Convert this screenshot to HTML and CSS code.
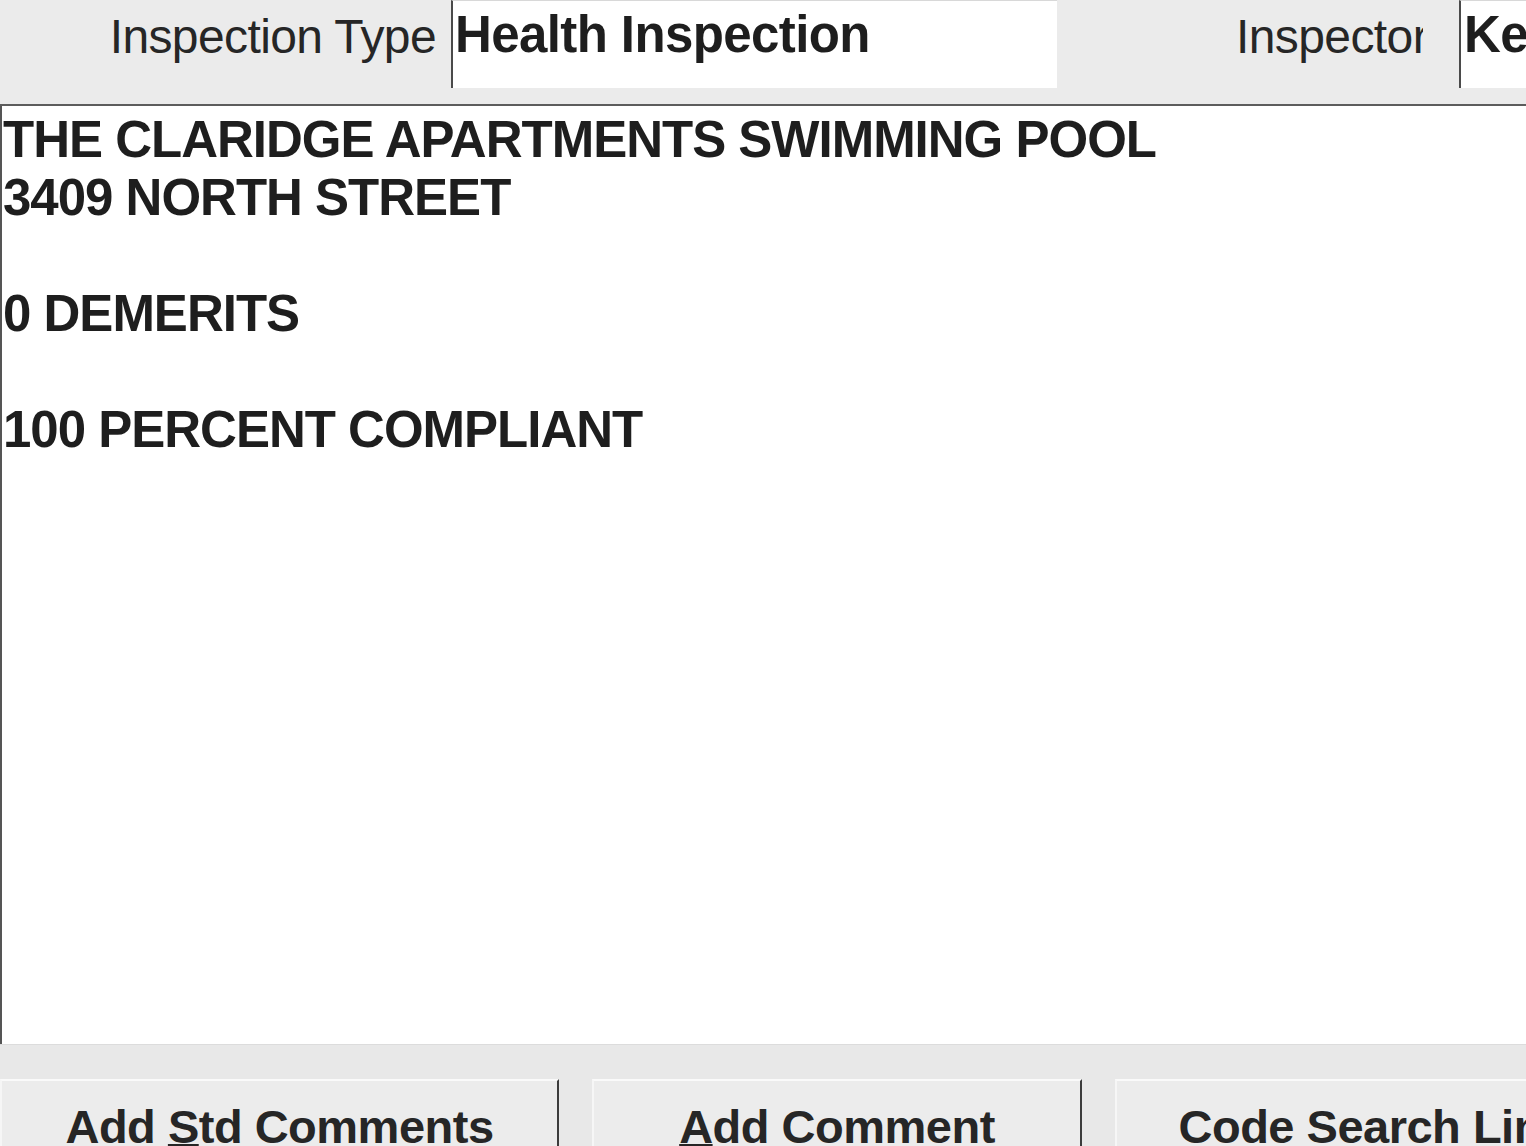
FILE: index.html
```html
<!DOCTYPE html>
<html lang="en">
<head>
<meta charset="utf-8">
<title>Inspection Comments</title>
<link rel="stylesheet" href="styles.css">
</head>
<body>
<div class="screen">
  <div class="topbar">
    <div class="label label-type">Inspection Type</div>
    <div class="field field-type">Health Inspection</div>
    <div class="label label-inspector">Inspector</div>
    <div class="field field-inspector">Ke</div>
  </div>
  <div class="notes">THE CLARIDGE APARTMENTS SWIMMING POOL
3409 NORTH STREET

0 DEMERITS

100 PERCENT COMPLIANT</div>
  <div class="actions">
    <div class="btn btn-std">Add <u>S</u>td Comments</div>
    <div class="btn btn-add"><u>A</u>dd Comment</div>
    <div class="btn btn-code">Code Search Link</div>
  </div>
</div>
</body>
</html>
```

FILE: styles.css
```css
html, body {
  margin: 0;
  padding: 0;
  width: 1526px;
  height: 1146px;
  overflow: hidden;
  background: #e9e9e9;
}

.screen {
  width: 1526px;
  height: 1146px;
  overflow: hidden;
  display: flex;
  flex-direction: column;
  font-family: "Liberation Sans", Arial, sans-serif;
  color: #222;
}

.topbar {
  height: 104px;
  flex: none;
  display: flex;
  align-items: flex-start;
  background: #ebebeb;
  border-bottom: 2px solid #5c5c5c;
}

.label {
  font-size: 48px;
  letter-spacing: -0.6px;
  line-height: 58px;
  padding-top: 8px;
  white-space: nowrap;
  color: #262626;
  box-sizing: border-box;
}

.label-type {
  width: 451px;
  text-align: right;
  padding-right: 15px;
}

.label-inspector {
  width: 366px;
  padding-left: 179px;
  overflow: hidden;
  margin-right: 36px;
}

.field {
  height: 88px;
  box-sizing: border-box;
  background: #fff;
  border-left: 2px solid #4a4a4a;
  border-top: 1px solid #d8d8d8;
  padding: 5px 0 0 2px;
  font-weight: bold;
  font-size: 51px;
  letter-spacing: -0.6px;
  line-height: 58px;
  white-space: nowrap;
  overflow: hidden;
  color: #1e1e1e;
}

.field-type {
  width: 606px;
}

.field-inspector {
  flex: 1;
  padding-left: 3px;
}

.notes {
  height: 938px;
  flex: none;
  box-sizing: border-box;
  background: #fff;
  border-left: 2px solid #555;
  padding: 5px 0 0 1px;
  white-space: pre-line;
  font-weight: bold;
  font-size: 51px;
  letter-spacing: -1px;
  line-height: 58px;
  color: #1e1e1e;
}

.actions {
  flex: 1;
  display: flex;
  gap: 33px;
  padding-top: 34px;
  background: #e8e8e8;
  border-top: 1px solid #dcdcdc;
  box-sizing: border-box;
}

.btn {
  flex: none;
  height: 120px;
  box-sizing: border-box;
  background: #ececec;
  border-top: 2px solid #fafafa;
  border-left: 2px solid #f6f6f6;
  border-right: 2px solid #3c3c3c;
  padding-top: 17px;
  text-align: center;
  font-weight: bold;
  font-size: 47px;
  letter-spacing: -0.5px;
  line-height: 58px;
  white-space: nowrap;
  color: #262626;
}

.btn u {
  text-decoration-thickness: 3px;
  text-underline-offset: 1px;
}

.btn-std {
  width: 559px;
}

.btn-add {
  width: 490px;
}

.btn-code {
  width: 516px;
}
```
